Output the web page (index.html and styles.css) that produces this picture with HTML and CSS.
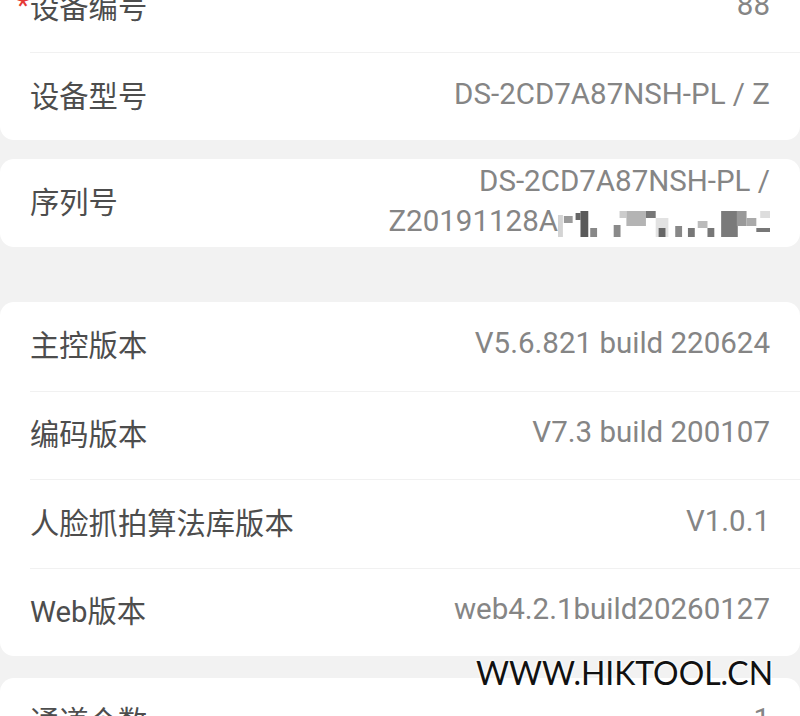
FILE: index.html
```html
<!DOCTYPE html>
<html lang="zh-CN">
<head>
<meta charset="utf-8">
<title>设备信息</title>
<link rel="stylesheet" href="styles.css">
</head>
<body>
<div class="page">
  <section class="card card-first">
    <div class="row">
      <span class="label required">设备编号</span>
      <span class="value">88</span>
    </div>
    <div class="row">
      <span class="label">设备型号</span>
      <span class="value">DS-2CD7A87NSH-PL / Z</span>
    </div>
  </section>

  <section class="card card-serial">
    <div class="row">
      <span class="label">序列号</span>
      <span class="value value-multi">DS-2CD7A87NSH-PL /<br>Z20191128A<svg class="mosaic" width="212" height="27" viewBox="0 0 217 27" preserveAspectRatio="none" aria-hidden="true">
        <rect x="0" y="5" width="5" height="22" fill="#d4d4d4"/>
        <rect x="6" y="6" width="9" height="7" fill="#9a9a9a"/>
        <rect x="18" y="3" width="5" height="7" fill="#666"/>
        <rect x="23" y="1" width="8" height="26" fill="#5a5a5a"/>
        <rect x="33" y="18" width="7" height="9" fill="#888"/>
        <rect x="57" y="15" width="7" height="12" fill="#8a8a8a"/>
        <rect x="63" y="1" width="7" height="7" fill="#ccc"/>
        <rect x="70" y="1" width="20" height="15" fill="#b4b4b4"/>
        <rect x="90" y="1" width="10" height="7" fill="#777"/>
        <rect x="100" y="8" width="13" height="19" fill="#e2e2e2"/>
        <rect x="103" y="18" width="7" height="9" fill="#666"/>
        <rect x="120" y="16" width="7" height="11" fill="#888"/>
        <rect x="133" y="18" width="7" height="9" fill="#777"/>
        <rect x="143" y="11" width="10" height="7" fill="#bbb"/>
        <rect x="153" y="18" width="7" height="9" fill="#777"/>
        <rect x="167" y="1" width="17" height="26" fill="#7a7a7a"/>
        <rect x="183" y="1" width="10" height="15" fill="#999"/>
        <rect x="193" y="8" width="10" height="8" fill="#aaa"/>
        <rect x="207" y="1" width="10" height="7" fill="#ddd"/>
        <rect x="203" y="18" width="14" height="4" fill="#777"/>
      </svg></span>
    </div>
  </section>

  <section class="card card-versions">
    <div class="row">
      <span class="label">主控版本</span>
      <span class="value">V5.6.821 build 220624</span>
    </div>
    <div class="row">
      <span class="label">编码版本</span>
      <span class="value">V7.3 build 200107</span>
    </div>
    <div class="row">
      <span class="label">人脸抓拍算法库版本</span>
      <span class="value">V1.0.1</span>
    </div>
    <div class="row">
      <span class="label">Web版本</span>
      <span class="value">web4.2.1build20260127</span>
    </div>
  </section>

  <section class="card card-channels">
    <div class="row">
      <span class="label">通道个数</span>
      <span class="value">1</span>
    </div>
  </section>
</div>
<div class="watermark">WWW.HIKTOOL.CN</div>
</body>
</html>
```

FILE: styles.css
```css
html, body {
  margin: 0;
  padding: 0;
  background: #f2f2f2;
  height: 716px;
  overflow: hidden;
}

body {
  font-family: Roboto, "Noto Sans CJK SC", sans-serif;
  position: relative;
}

.page {
  margin-top: -36px;
  display: flex;
  flex-direction: column;
}

.card {
  background: #ffffff;
  border-radius: 14px;
}

.card-serial {
  margin-top: 19px;
}

.card-versions {
  margin-top: 55px;
}

.card-channels {
  margin-top: 22px;
}

.row {
  margin-left: 30px;
  padding-right: 30px;
  padding-bottom: 6px;
  height: 88px;
  display: flex;
  align-items: center;
  justify-content: space-between;
  box-sizing: border-box;
}

.card-versions .row {
  height: 88.5px;
}

.row + .row {
  border-top: 1px solid #f1f1f1;
}

.label {
  font-size: 29.3px;
  color: #4d4d4d;
  white-space: nowrap;
  position: relative;
}

.required::before {
  content: "*";
  position: absolute;
  left: -13px;
  top: 8px;
  line-height: 1;
  color: #e53935;
  font-size: 28px;
}

.value {
  font-size: 29.5px;
  color: #858585;
  text-align: right;
  white-space: nowrap;
}

.value-multi {
  line-height: 40px;
  margin-top: 2px;
}

.mosaic {
  vertical-align: -6px;
}

.watermark {
  position: absolute;
  left: 476px;
  top: 654px;
  font-family: Lato, "Liberation Sans", sans-serif;
  font-size: 31.9px;
  color: #111111;
  text-shadow: 0 0 3px #fff, 0 0 3px #fff, 0 0 2px #fff;
}
```
